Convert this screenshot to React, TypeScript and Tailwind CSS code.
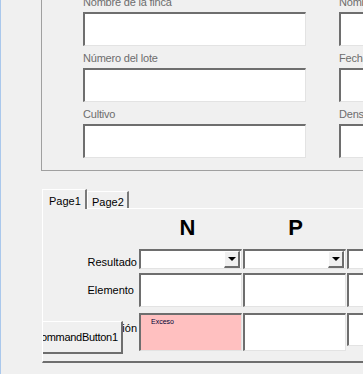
import React from "react";

const sunken =
  "border-t-2 border-l-2 border-t-[#6e6e6e] border-l-[#6e6e6e] border-b border-r border-b-[#e3e3e3] border-r-[#e3e3e3]";

const FincaField = ({ label }: { label: string }) => (
  <div className="flex flex-col">
    <div className="h-[22px] flex items-end pb-[2px] text-[11px] leading-[15px] text-[#6d6d6d] tracking-[-0.2px]">
      {label}
    </div>
    <div className={`h-[34px] w-[223px] bg-white ${sunken}`} />
  </div>
);

const Combo = () => (
  <div className={`h-[20px] w-[103px] bg-white flex justify-end ${sunken}`}>
    <div className="w-[16px] h-full mr-px flex items-center justify-center bg-[#f0f0f0] border-t border-l border-t-white border-l-white border-b-2 border-r-2 border-b-[#6e6e6e] border-r-[#6e6e6e]">
      <div className="w-0 h-0 border-l-[4px] border-r-[4px] border-t-[4px] border-l-transparent border-r-transparent border-t-black" />
    </div>
  </div>
);

const Box = ({ h, pink, children }: { h: string; pink?: boolean; children?: React.ReactNode }) => (
  <div className={`${h} w-[103px] ${pink ? "bg-[#ffc0c0]" : "bg-white"} ${sunken}`}>{children}</div>
);

export default function App() {
  return (
    <div className="w-[363px] h-[374px] bg-[#f0f0f0] border-l border-[#aac8ec] overflow-hidden font-['Liberation_Sans',Arial,sans-serif]">
      {/* marco de datos de la finca */}
      <div className="w-[600px] -mt-[20px] ml-[40px] border border-[#a0a0a0] pt-[9px] pb-[12px] pl-[41px]">
        <div className="grid grid-cols-[223px_223px] gap-x-[33px]">
          <FincaField label="Nombre de la finca" />
          <FincaField label="Nombre del propietario" />
          <FincaField label="Número del lote" />
          <FincaField label="Fecha de muestreo" />
          <FincaField label="Cultivo" />
          <FincaField label="Densidad de siembra" />
        </div>
      </div>

      {/* pestañas */}
      <div className="mt-[18px] ml-[41px] w-[500px]">
        <div className="flex items-end h-[19px] text-[11px] text-black">
          <div className="relative z-10 h-[20px] -mb-px w-[45px] pl-[6px] pt-[3px] bg-[#f0f0f0] border-t border-l border-t-white border-l-white border-r-2 border-r-[#7a7a7a]">
            Page1
          </div>
          <div className="h-[17px] w-[42px] pl-[4px] pt-[2px] border-t border-l border-t-white border-l-white border-r-2 border-r-[#7a7a7a]">
            Page2
          </div>
        </div>

        <div className="relative h-[155px] overflow-hidden border-t border-l border-t-white border-l-white border-b-2 border-b-[#6e6e6e]">
          <div className="flex h-[40px] pt-[7px] text-[22px] leading-[24px] font-bold text-black">
            <div className="w-[96px]" />
            <div className="w-[103px] text-center pr-[6px]">N</div>
            <div className="w-[1px]" />
            <div className="w-[103px] text-center pl-[2px]">P</div>
          </div>

          <div className="flex gap-x-[1px] text-[11px] leading-[13px] text-black">
            <div className="w-[95px] text-right pr-[1px] pt-[7px]">Resultado</div>
            <Combo />
            <Combo />
            <Combo />
          </div>

          <div className="flex gap-x-[1px] mt-[4px] text-[11px] leading-[13px] text-black">
            <div className="w-[95px] flex items-center justify-end pr-[4px]">Elemento</div>
            <Box h="h-[34px]" />
            <Box h="h-[34px]" />
            <Box h="h-[34px]" />
          </div>

          <div className="flex items-start gap-x-[1px] mt-[6px] text-[11px] leading-[13px] text-black">
            <div className="w-[95px] text-right pr-[1px] pt-[9px]">Interpretación</div>
            <Box h="h-[38px]" pink>
              <div className="pl-[10px] pt-[3px] text-[7px] leading-[8px] text-[#000033]">Exceso</div>
            </Box>
            <Box h="h-[38px]" />
            <Box h="h-[33px]" />
          </div>

          <button className="absolute left-[-11px] top-[112px] w-[91px] h-[33px] pr-[3px] text-[11px] tracking-[-0.3px] text-black bg-[#f0f0f0] border-t border-l border-t-white border-l-white border-b-2 border-r-2 border-b-[#6e6e6e] border-r-[#6e6e6e]">
            CommandButton1
          </button>
        </div>
      </div>
    </div>
  );
}
